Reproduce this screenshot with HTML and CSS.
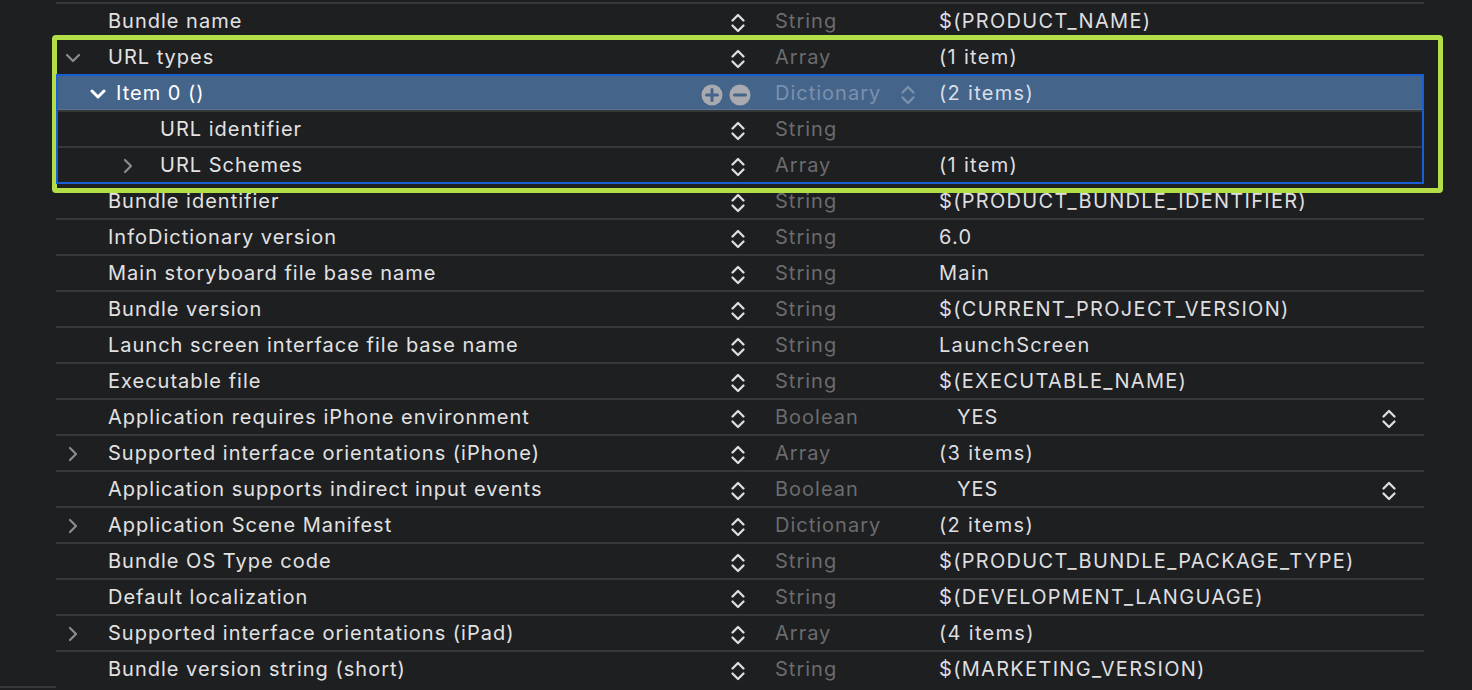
FILE: index.html
```html
<!DOCTYPE html>
<html lang="en">
<head>
<meta charset="utf-8">
<title>Info.plist</title>
<link rel="stylesheet" href="styles.css">
</head>
<body>
<svg width="0" height="0" class="defs" aria-hidden="true">
  <defs>
    <symbol id="stepper" viewBox="0 0 16 22">
      <polyline points="2.5,8.5 8,3 13.5,8.5" fill="none" stroke="currentColor" stroke-width="2.3" stroke-linecap="round" stroke-linejoin="round"/>
      <polyline points="2.5,13.5 8,19 13.5,13.5" fill="none" stroke="currentColor" stroke-width="2.3" stroke-linecap="round" stroke-linejoin="round"/>
    </symbol>
    <symbol id="chev-down" viewBox="0 0 16 10">
      <polyline points="2,2 8,8 14,2" fill="none" stroke="currentColor" stroke-width="2.2" stroke-linecap="round" stroke-linejoin="round"/>
    </symbol>
    <symbol id="chev-down-bold" viewBox="0 0 16 10">
      <polyline points="2,2 8,8 14,2" fill="none" stroke="currentColor" stroke-width="3" stroke-linecap="round" stroke-linejoin="round"/>
    </symbol>
    <symbol id="chev-right" viewBox="0 0 10 16">
      <polyline points="2,2 8,8 2,14" fill="none" stroke="currentColor" stroke-width="2.2" stroke-linecap="round" stroke-linejoin="round"/>
    </symbol>
  </defs>
</svg>

<div class="layout">
  <div class="gutter"></div>
  <div class="table">

    <div class="row">
      <div class="key l0"><span class="disc"></span><span class="name">Bundle name</span></div>
      <div class="step"><svg class="stepper"><use href="#stepper"/></svg></div>
      <div class="type">String</div>
      <div class="value">$(PRODUCT_NAME)</div>
    </div>

    <div class="highlight">
      <div class="row">
        <div class="key l0"><span class="disc"><svg class="chev-down"><use href="#chev-down"/></svg></span><span class="name">URL types</span></div>
        <div class="step"><svg class="stepper"><use href="#stepper"/></svg></div>
        <div class="type">Array</div>
        <div class="value">(1 item)</div>
      </div>

      <div class="focus">
        <div class="row selected">
          <div class="key l1"><span class="disc"><svg class="chev-down bold"><use href="#chev-down-bold"/></svg></span><span class="name">Item 0 ()</span></div>
          <div class="step">
            <div class="pm">
              <svg class="pm-btn" viewBox="0 0 22 22"><circle cx="11" cy="11" r="10.5"/><line x1="5.5" y1="11" x2="16.5" y2="11"/><line x1="11" y1="5.5" x2="11" y2="16.5"/></svg>
              <svg class="pm-btn" viewBox="0 0 22 22"><circle cx="11" cy="11" r="10.5"/><line x1="5.5" y1="11" x2="16.5" y2="11"/></svg>
            </div>
          </div>
          <div class="type">Dictionary<svg class="stepper muted"><use href="#stepper"/></svg></div>
          <div class="value">(2 items)</div>
        </div>

        <div class="row">
          <div class="key l2"><span class="disc"></span><span class="name">URL identifier</span></div>
          <div class="step"><svg class="stepper"><use href="#stepper"/></svg></div>
          <div class="type">String</div>
          <div class="value"></div>
        </div>

        <div class="row">
          <div class="key l2"><span class="disc"><svg class="chev-right"><use href="#chev-right"/></svg></span><span class="name">URL Schemes</span></div>
          <div class="step"><svg class="stepper"><use href="#stepper"/></svg></div>
          <div class="type">Array</div>
          <div class="value">(1 item)</div>
        </div>
      </div>
    </div>

    <div class="row">
      <div class="key l0"><span class="disc"></span><span class="name">Bundle identifier</span></div>
      <div class="step"><svg class="stepper"><use href="#stepper"/></svg></div>
      <div class="type">String</div>
      <div class="value">$(PRODUCT_BUNDLE_IDENTIFIER)</div>
    </div>

    <div class="row">
      <div class="key l0"><span class="disc"></span><span class="name">InfoDictionary version</span></div>
      <div class="step"><svg class="stepper"><use href="#stepper"/></svg></div>
      <div class="type">String</div>
      <div class="value">6.0</div>
    </div>

    <div class="row">
      <div class="key l0"><span class="disc"></span><span class="name">Main storyboard file base name</span></div>
      <div class="step"><svg class="stepper"><use href="#stepper"/></svg></div>
      <div class="type">String</div>
      <div class="value">Main</div>
    </div>

    <div class="row">
      <div class="key l0"><span class="disc"></span><span class="name">Bundle version</span></div>
      <div class="step"><svg class="stepper"><use href="#stepper"/></svg></div>
      <div class="type">String</div>
      <div class="value">$(CURRENT_PROJECT_VERSION)</div>
    </div>

    <div class="row">
      <div class="key l0"><span class="disc"></span><span class="name">Launch screen interface file base name</span></div>
      <div class="step"><svg class="stepper"><use href="#stepper"/></svg></div>
      <div class="type">String</div>
      <div class="value">LaunchScreen</div>
    </div>

    <div class="row">
      <div class="key l0"><span class="disc"></span><span class="name">Executable file</span></div>
      <div class="step"><svg class="stepper"><use href="#stepper"/></svg></div>
      <div class="type">String</div>
      <div class="value">$(EXECUTABLE_NAME)</div>
    </div>

    <div class="row">
      <div class="key l0"><span class="disc"></span><span class="name">Application requires iPhone environment</span></div>
      <div class="step"><svg class="stepper"><use href="#stepper"/></svg></div>
      <div class="type">Boolean</div>
      <div class="value bool"><span>YES</span><svg class="stepper"><use href="#stepper"/></svg></div>
    </div>

    <div class="row">
      <div class="key l0"><span class="disc"><svg class="chev-right"><use href="#chev-right"/></svg></span><span class="name">Supported interface orientations (iPhone)</span></div>
      <div class="step"><svg class="stepper"><use href="#stepper"/></svg></div>
      <div class="type">Array</div>
      <div class="value">(3 items)</div>
    </div>

    <div class="row">
      <div class="key l0"><span class="disc"></span><span class="name">Application supports indirect input events</span></div>
      <div class="step"><svg class="stepper"><use href="#stepper"/></svg></div>
      <div class="type">Boolean</div>
      <div class="value bool"><span>YES</span><svg class="stepper"><use href="#stepper"/></svg></div>
    </div>

    <div class="row">
      <div class="key l0"><span class="disc"><svg class="chev-right"><use href="#chev-right"/></svg></span><span class="name">Application Scene Manifest</span></div>
      <div class="step"><svg class="stepper"><use href="#stepper"/></svg></div>
      <div class="type">Dictionary</div>
      <div class="value">(2 items)</div>
    </div>

    <div class="row">
      <div class="key l0"><span class="disc"></span><span class="name">Bundle OS Type code</span></div>
      <div class="step"><svg class="stepper"><use href="#stepper"/></svg></div>
      <div class="type">String</div>
      <div class="value">$(PRODUCT_BUNDLE_PACKAGE_TYPE)</div>
    </div>

    <div class="row">
      <div class="key l0"><span class="disc"></span><span class="name">Default localization</span></div>
      <div class="step"><svg class="stepper"><use href="#stepper"/></svg></div>
      <div class="type">String</div>
      <div class="value">$(DEVELOPMENT_LANGUAGE)</div>
    </div>

    <div class="row">
      <div class="key l0"><span class="disc"><svg class="chev-right"><use href="#chev-right"/></svg></span><span class="name">Supported interface orientations (iPad)</span></div>
      <div class="step"><svg class="stepper"><use href="#stepper"/></svg></div>
      <div class="type">Array</div>
      <div class="value">(4 items)</div>
    </div>

    <div class="row">
      <div class="key l0"><span class="disc"></span><span class="name">Bundle version string (short)</span></div>
      <div class="step"><svg class="stepper"><use href="#stepper"/></svg></div>
      <div class="type">String</div>
      <div class="value">$(MARKETING_VERSION)</div>
    </div>

  </div>
</div>
<div class="footer-line"></div>
</body>
</html>
```

FILE: styles.css
```css
html, body {
  margin: 0;
  padding: 0;
  background: #1e1f21;
  overflow: hidden;
}

body {
  width: 1472px;
  height: 690px;
  font-family: Inter, "Noto Sans", "Liberation Sans", sans-serif;
  font-size: 20px;
  letter-spacing: 1px;
  color: #e2e2e3;
}

.defs {
  position: absolute;
  width: 0;
  height: 0;
}

.layout {
  display: grid;
  grid-template-columns: 56px 1368px;
}

.table {
  padding-top: 2px;
}

.row {
  display: grid;
  grid-template-columns: 670px 24px 189px 1fr;
  align-items: center;
  height: 34px;
  border-top: 2px solid #363739;
}

.key {
  display: flex;
  align-items: center;
  white-space: nowrap;
}

.disc {
  display: flex;
  align-items: center;
  flex: none;
  color: #8c8c8f;
}

.key.l0 .disc { width: 43px; padding-left: 9px; }
.key.l1 .disc { width: 26px; padding-left: 34px; }
.key.l2 .disc { width: 40px; padding-left: 64px; }

.chev-down {
  width: 16px;
  height: 10px;
  margin-top: 2px;
}

.chev-down.bold {
  color: #ffffff;
}

.chev-right {
  width: 10px;
  height: 16px;
  margin-left: 3px;
  margin-top: 1px;
}

.step {
  display: flex;
  justify-content: center;
  align-items: center;
  color: #dedee0;
}

.stepper {
  width: 16px;
  height: 22px;
  margin-top: 3px;
  flex: none;
}

.type {
  display: flex;
  align-items: center;
  padding-left: 25px;
  color: #6b6b6e;
}

.stepper.muted {
  color: #7b91ad;
  margin-left: 19px;
}

.value {
  color: #dedee0;
  white-space: nowrap;
  letter-spacing: 1.3px;
}

.value.bool {
  display: flex;
  justify-content: space-between;
  align-items: center;
  padding-left: 18px;
  padding-right: 27px;
  letter-spacing: 1px;
}

.highlight {
  position: relative;
}

.highlight::before {
  content: "";
  position: absolute;
  top: -3px;
  left: -4px;
  right: -19px;
  bottom: -11px;
  border: 5px solid #b3de48;
  border-radius: 4px;
  pointer-events: none;
}

.focus {
  position: relative;
}

.focus::after {
  content: "";
  position: absolute;
  top: 0;
  left: 0;
  right: 0;
  bottom: -2px;
  border: 2px solid #1a5fd1;
  pointer-events: none;
}

.row.selected {
  background: #44648a;
  box-shadow: inset 0 -1px 0 #5a7494;
}

.row.selected .name {
  color: #ffffff;
}

.row.selected .type {
  color: #7b91ad;
}

.row.selected .value {
  color: #d8dfe8;
}

.row.selected .step {
  justify-content: flex-end;
}

.pm {
  display: flex;
  gap: 6px;
  margin-right: -1px;
  margin-top: 3px;
  flex: none;
}

.pm-btn {
  width: 22px;
  height: 22px;
  flex: none;
}

.pm-btn circle {
  fill: #a8aaaf;
}

.pm-btn line {
  stroke: #44648a;
  stroke-width: 3;
  stroke-linecap: round;
}

.footer-line {
  width: 56px;
  height: 2px;
  background: #363739;
}
```
